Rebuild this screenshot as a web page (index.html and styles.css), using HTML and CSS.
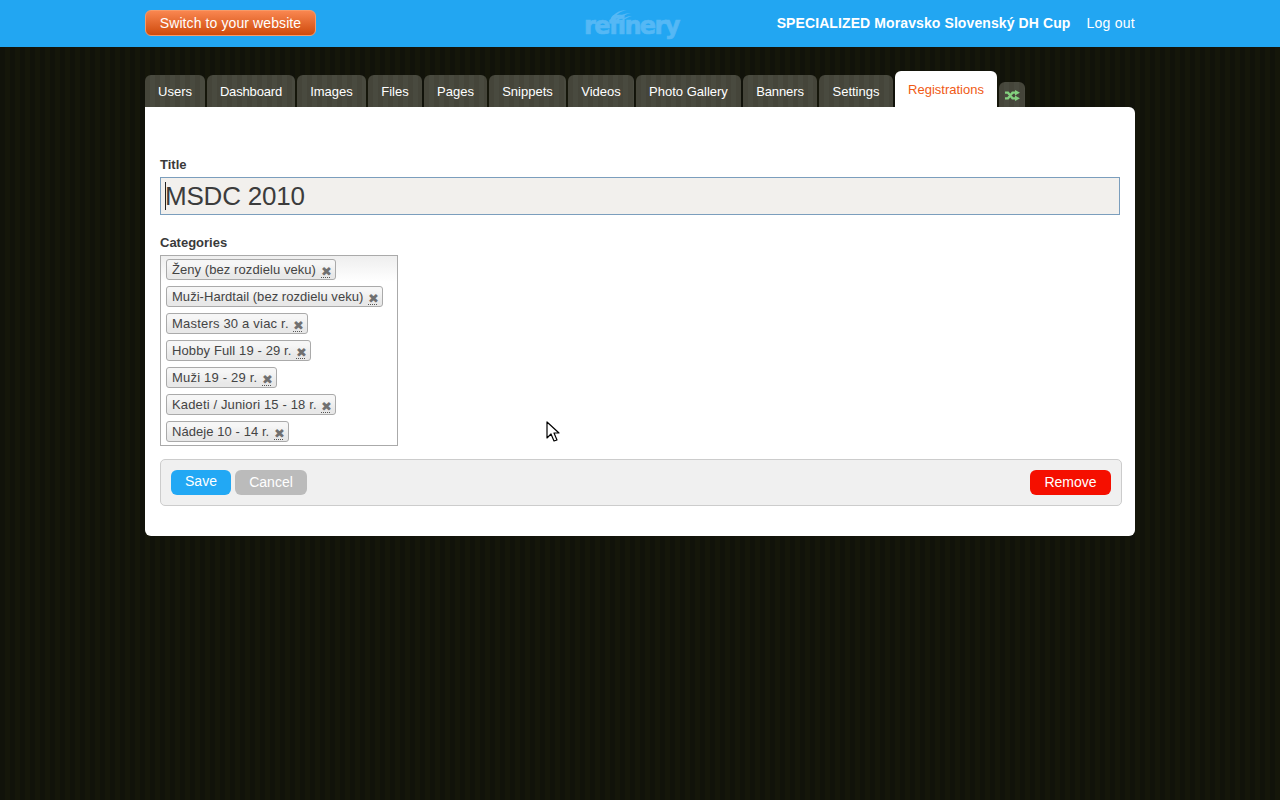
FILE: index.html
```html
<!DOCTYPE html>
<html lang="en">
<head>
    <meta charset="UTF-8">
    <title>Refinery - Registrations</title>
    <link rel="stylesheet" href="styles.css">
</head>
<body>
    <header class="site-bar">
        <div class="wrap site-bar-inner">
            <a class="switch-btn" href="#">Switch to your website</a>
            <div class="logo">
                <svg class="logo-wing" width="26" height="12" viewBox="0 0 26 12"><path d="M3 11C6 5 12 1 20 1c-6 1-11 4-14 10zM9 11c3-4 8-7 15-7-5 1-9 3-12 7zM15 11c2-2 5-4 10-4-3 1-6 2-8 4z" fill="#55b8f5"/></svg>
                <span class="logo-text">refinery</span>
            </div>
            <div class="site-links">
                <span class="site-name">SPECIALIZED Moravsko Slovenský DH Cup</span>
                <a class="logout" href="#">Log out</a>
            </div>
        </div>
    </header>

    <div class="wrap">
        <nav class="tabs">
            <a class="tab" href="#">Users</a>
            <a class="tab" href="#">Dashboard</a>
            <a class="tab" href="#">Images</a>
            <a class="tab" href="#">Files</a>
            <a class="tab" href="#">Pages</a>
            <a class="tab" href="#">Snippets</a>
            <a class="tab" href="#">Videos</a>
            <a class="tab" href="#">Photo Gallery</a>
            <a class="tab" href="#">Banners</a>
            <a class="tab" href="#">Settings</a>
            <a class="tab tab-active" href="#">Registrations</a>
            <a class="tab tab-icon" href="#">
                <svg width="15" height="11" viewBox="0 0 15 11"><path d="M0 2.700h3l4.500 5.600h3M0 8.300h3l4.500-5.600h3" fill="none" stroke="#83d07e" stroke-width="2.300"/><path d="M10 0l5 2.700-5 2.700zM10 5.600l5 2.700-5 2.700z" fill="#83d07e"/></svg>
            </a>
        </nav>

        <main class="panel">
            <form>
                <label class="field-label" for="title">Title</label>
                <div class="title-input" id="title"><span class="caret"></span>MSDC 2010</div>

                <label class="field-label categories-label">Categories</label>
                <ul class="chips">
                    <li class="chip">Ženy (bez rozdielu veku)<span class="chip-x">✖</span></li>
                    <li class="chip">Muži-Hardtail (bez rozdielu veku)<span class="chip-x">✖</span></li>
                    <li class="chip">Masters 30 a viac r.<span class="chip-x">✖</span></li>
                    <li class="chip">Hobby Full 19 - 29 r.<span class="chip-x">✖</span></li>
                    <li class="chip">Muži 19 - 29 r.<span class="chip-x">✖</span></li>
                    <li class="chip">Kadeti / Juniori 15 - 18 r.<span class="chip-x">✖</span></li>
                    <li class="chip">Nádeje 10 - 14 r.<span class="chip-x">✖</span></li>
                </ul>

                <div class="actions">
                    <a class="btn btn-save" href="#">Save</a>
                    <a class="btn btn-cancel" href="#">Cancel</a>
                    <a class="btn btn-remove" href="#">Remove</a>
                </div>
            </form>
        </main>
    </div>

    <svg class="cursor" width="14" height="21" viewBox="0 0 14 21"><path d="M1 1v16l4-4 3 7 3-1-3-7h5z" fill="#fff" stroke="#000" stroke-width="1.200" stroke-linejoin="round"/></svg>
</body>
</html>
```

FILE: styles.css
```css
* { box-sizing: border-box; }
body { margin: 0; height: 800px; overflow: hidden; font-family: "Liberation Sans", Arial, sans-serif; font-size: 13px; color: #333; background-color: #11120a; background-image: repeating-linear-gradient(90deg, #11120a 0, #11120a 5px, #15160a 5px, #15160a 10px); }
a { text-decoration: none; }
.wrap { width: 990px; margin-left: 145px; }

.site-bar { height: 47px; background-color: #22a6f2; }
.site-bar-inner { display: flex; align-items: center; height: 47px; position: relative; }
.switch-btn { width: 171px; height: 26px; margin-bottom: 1px; border: 1px solid #f79a68; border-radius: 6px; background: linear-gradient(#f98650, #cf4a0c); color: #fff; font-size: 14px; letter-spacing: 0.1px; line-height: 24px; text-align: center; }
.logo { position: absolute; left: 440px; top: 9px; width: 96px; height: 32px; }
.logo-wing { position: absolute; left: 22px; top: 0; }
.logo-text { position: absolute; left: -1px; top: 3px; font-family: "DejaVu Sans", sans-serif; font-weight: bold; font-size: 24px; letter-spacing: -1.600px; color: #55b8f5; -webkit-text-stroke: 0.7px #55b8f5; }
.site-links { margin-left: auto; margin-bottom: 2px; display: flex; gap: 16px; font-size: 14px; color: #fff; }
.site-name { font-weight: bold; letter-spacing: 0.1px; }
.logout { color: #fff; letter-spacing: 0.25px; }

.tabs { display: flex; align-items: flex-end; gap: 2px; height: 60px; }
.tab { height: 32px; border-radius: 6px 6px 0 0; background-color: #45453a; background-image: repeating-linear-gradient(90deg, #45453a 0, #45453a 5px, #494a3f 5px, #494a3f 10px); color: #fff; font-size: 13px; line-height: 33px; text-align: center; }
/* tab widths are fixed, text metrics differ a little per label */
.tab:nth-child(1) { width: 60px; }
.tab:nth-child(2) { width: 88px; letter-spacing: -0.15px; }
.tab:nth-child(3) { width: 69px; }
.tab:nth-child(4) { width: 54px; }
.tab:nth-child(5) { width: 63px; }
.tab:nth-child(6) { width: 77px; }
.tab:nth-child(7) { width: 66px; }
.tab:nth-child(8) { width: 105px; }
.tab:nth-child(9) { width: 74px; letter-spacing: -0.1px; }
.tab:nth-child(10) { width: 74px; }
.tab-active:nth-child(11) { width: 102px; height: 36px; background: #fff; color: #f05a14; line-height: 37px; }
.tab-icon:nth-child(12) { width: 26px; height: 25px; padding: 8px 0 0 6px; line-height: 0; text-align: left; }

.panel { height: 429px; padding: 50px 15px 0; border-radius: 0 6px 6px 6px; background: #fff; }
.field-label { display: block; font-size: 13px; font-weight: bold; line-height: 15px; color: #3a3a3a; }
.title-input { position: relative; width: 960px; height: 38px; margin-top: 5px; padding-left: 4px; border: 1px solid #7b9ebd; background: #f2f0ed; font-size: 26px; letter-spacing: -0.2px; line-height: 37px; color: #3c3c3c; }
.caret { position: absolute; left: 4px; top: 4px; width: 1px; height: 28px; background: #222; }
.categories-label { margin-top: 20px; }

.chips { width: 238px; height: 191px; margin: 5px 0 0; padding: 3px 5px 0; list-style: none; border: 1px solid #aaa; background: linear-gradient(#eee, #fff 26px); }
.chip { display: flex; width: fit-content; height: 21px; margin-bottom: 6px; padding: 0 3px 0 5px; border: 1px solid #aaa; border-radius: 3px; background: linear-gradient(#f6f6f6 20%, #e8e8e8 80%); font-size: 13px; letter-spacing: 0.07px; line-height: 19px; color: #444; white-space: nowrap; }
.chip:nth-child(2) { letter-spacing: 0.04px; }
.chip:nth-child(3) { letter-spacing: 0.2px; }
.chip:nth-child(4) { letter-spacing: 0.12px; }
.chip:nth-child(5) { letter-spacing: 0.2px; }
.chip:nth-child(6) { letter-spacing: 0.14px; }
.chip-x { width: 9px; height: 16px; margin: 2px 2px 0 4.600px; border-bottom: 1px dotted #555; font-size: 13px; line-height: 20px; color: #707070; text-align: center; letter-spacing: 0; }

.actions { display: flex; align-items: center; gap: 4px; width: 962px; height: 47px; margin-top: 13px; padding: 0 10px; border: 1px solid #ccc; border-radius: 5px; background: #f0f0f0; }
.btn { height: 25px; border-radius: 6px; color: #fff; font-size: 14px; line-height: 24px; text-align: center; }
.btn-save { width: 60px; background: #22a8f4; line-height: 22px; }
.btn-cancel { width: 72px; background: #bbb; }
.btn-remove { width: 81px; margin-left: auto; background: #f50f00; }

.cursor { position: absolute; left: 546px; top: 421px; }
```
